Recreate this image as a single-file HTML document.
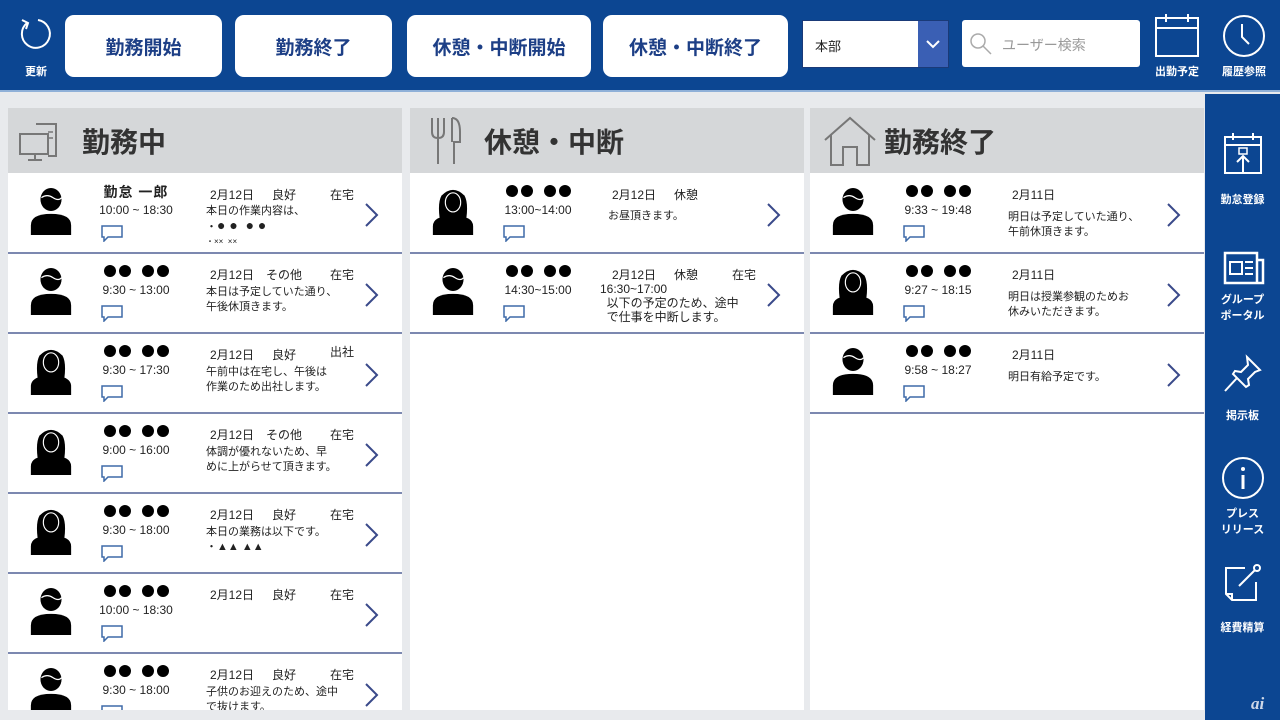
<!DOCTYPE html>
<html><head><meta charset="utf-8">
<style>
*{margin:0;padding:0;box-sizing:border-box}
body{width:1280px;height:720px;overflow:hidden;background:#e8eaed;font-family:"Liberation Sans","Noto Sans CJK JP",sans-serif;position:relative;color:#222}
.hdr{position:absolute;left:0;top:0;width:1280px;height:92px;background:#0c4692;border-bottom:2px solid #8fb0d8}
.btn{position:absolute;top:15px;height:62px;background:#fff;border-radius:9px;color:#1d3f86;font-weight:bold;font-size:19px;display:flex;align-items:center;justify-content:center}
.wt{position:absolute;color:#fff;font-size:11px;font-weight:bold;text-align:center;line-height:16px}
.side{position:absolute;left:1205px;top:94px;width:75px;height:626px;background:#0c4692}
.col{position:absolute;top:108px;width:394px;height:602px;background:#fff;overflow:hidden}
.ch{height:65px;background:#d5d7d9;position:relative}
.ch span{position:absolute;left:74px;top:13px;font-size:28px;font-weight:bold;color:#333}
.card{position:absolute;left:0;width:394px;height:80px;border-bottom:2px solid #7c88b0;background:#fff}
.card>*{position:absolute}
.av{left:20px;top:12px}
.nm{left:80px;width:96px;text-align:center;top:8px;font-size:14px;font-weight:bold;letter-spacing:1px}
.dd{left:80px;width:96px;top:11px;text-align:center;line-height:12px;height:12px}
.dd i{display:inline-block;width:12px;height:12px;border-radius:50%;background:#000;margin:0 1.5px}
.dd b{display:inline-block;width:8px}
.tm{left:80px;width:96px;text-align:center;top:29px;font-size:12px}
.cm{left:92px;top:50px}
.dt{left:202px;top:12px;font-size:12px}
.st{left:264px;top:12px;font-size:12px}
.lc{left:322px;top:12px;font-size:12px}
.ds{left:198px;top:31px;font-size:11px;line-height:15px}
.chev{left:356px;top:28px}
</style></head><body>
<svg width="0" height="0" style="position:absolute">
<defs>
<symbol id="m" viewBox="0 0 48 50"><ellipse cx="24" cy="13" rx="11" ry="12" fill="#000"/><path d="M14 11 q6 -4 12 0 q6 4 9 0" stroke="#fff" stroke-width="1.3" fill="none"/><path d="M3 50 v-10 q0-12 21-12 q21 0 21 12 v10z" fill="#000"/></symbol>
<symbol id="f" viewBox="0 0 48 50"><path d="M10 32 q-2 -16 2 -23 q12 -12 24 0 q4 7 2 23z" fill="#000"/><ellipse cx="24" cy="16" rx="8" ry="10" fill="#000" stroke="#fff" stroke-width="1.2"/><path d="M3 50 v-9 q0-11 21-11 q21 0 21 11 v9z" fill="#000"/></symbol>
<symbol id="c" viewBox="0 0 24 18"><path d="M2 2 h20 v11 h-14 l-4 4 v-4 h-2z" fill="none" stroke="#3e6aa8" stroke-width="1.5"/></symbol>
<symbol id="v" viewBox="0 0 16 26"><path d="M2 2 l11 11 l-11 11" fill="none" stroke="#3a4a8a" stroke-width="2"/></symbol>
</defs></svg>

<div class="hdr">
<svg style="position:absolute;left:18px;top:16px" width="36" height="38" viewBox="0 0 36 38"><path d="M9 7 A14 14 0 1 0 20 4" fill="none" stroke="#fff" stroke-width="2"/><path d="M4 4 l6 3 l-2 6" fill="none" stroke="#fff" stroke-width="2"/></svg>
<div class="wt" style="left:18px;top:64px;width:36px">更新</div>
<div class="btn" style="left:65px;width:157px">勤務開始</div>
<div class="btn" style="left:235px;width:157px">勤務終了</div>
<div class="btn" style="left:407px;width:184px">休憩・中断開始</div>
<div class="btn" style="left:603px;width:185px">休憩・中断終了</div>
<div style="position:absolute;left:802px;top:20px;width:147px;height:48px;background:#fff;border:1px solid #1a3a78"><span style="position:absolute;left:12px;top:15px;font-size:13px">本部</span><div style="position:absolute;right:0;top:0;width:30px;height:46px;background:#3a5fb4"><svg width="30" height="46"><path d="M9 20 l6 6 l6 -6" fill="none" stroke="#fff" stroke-width="2"/></svg></div></div>
<div style="position:absolute;left:962px;top:20px;width:178px;height:47px;background:#fff;border-radius:3px"><svg style="position:absolute;left:6px;top:11px" width="26" height="26"><circle cx="10" cy="10" r="7" fill="none" stroke="#aaa" stroke-width="1.5"/><path d="M15 15 l8 8" stroke="#aaa" stroke-width="1.5"/></svg><span style="position:absolute;left:40px;top:15px;font-size:14px;color:#999">ユーザー検索</span></div>
<svg style="position:absolute;left:1154px;top:12px" width="46" height="46"><rect x="2" y="6" width="42" height="38" fill="none" stroke="#fff" stroke-width="2"/><path d="M2 16 h42 M12 2 v8 M34 2 v8" stroke="#fff" stroke-width="2"/></svg>
<div class="wt" style="left:1146px;top:64px;width:62px">出勤予定</div>
<svg style="position:absolute;left:1221px;top:13px" width="46" height="46"><circle cx="23" cy="23" r="20" fill="none" stroke="#fff" stroke-width="2"/><path d="M21 11 v13 l7 7" fill="none" stroke="#fff" stroke-width="2"/></svg>
<div class="wt" style="left:1212px;top:64px;width:64px">履歴参照</div>
</div>

<div class="side">
<svg style="position:absolute;left:18px;top:38px" width="40" height="44"><rect x="2" y="5" width="36" height="36" fill="none" stroke="#fff" stroke-width="2"/><path d="M2 13 h36 M10 1 v7 M30 1 v7 M20 42 v-18 M14 30 l6 -6 l6 6" fill="none" stroke="#fff" stroke-width="2"/><rect x="16" y="16" width="8" height="6" fill="none" stroke="#fff" stroke-width="1.5"/></svg>
<div class="wt" style="left:0;top:98px;width:75px">勤怠登録</div>
<svg style="position:absolute;left:18px;top:156px" width="42" height="36"><path d="M2 3 h32 v30 h-32z M34 10 h6 v23 h-6" fill="none" stroke="#fff" stroke-width="2.5"/><rect x="7" y="12" width="12" height="12" fill="none" stroke="#fff" stroke-width="2"/><path d="M22 12 h8 M22 18 h8 M22 24 h8" stroke="#fff" stroke-width="2"/></svg>
<div class="wt" style="left:0;top:198px;width:75px">グループ<br>ポータル</div>
<svg style="position:absolute;left:18px;top:260px" width="40" height="40"><path d="M24 3 l13 13 l-5 2 l-7 7 l1 6 l-3 2 l-13 -13 l2 -3 l6 1 l7 -7z M14 24 l-12 13" fill="none" stroke="#fff" stroke-width="2"/></svg>
<div class="wt" style="left:0;top:314px;width:75px">掲示板</div>
<svg style="position:absolute;left:16px;top:362px" width="44" height="44"><circle cx="22" cy="22" r="20" fill="none" stroke="#fff" stroke-width="2"/><circle cx="22" cy="13" r="2" fill="#fff"/><path d="M22 19 v14" stroke="#fff" stroke-width="3"/></svg>
<div class="wt" style="left:0;top:412px;width:75px">プレス<br>リリース</div>
<svg style="position:absolute;left:18px;top:468px" width="40" height="40"><path d="M22 6 h-19 v26 l6 6 h24 v-18 M3 32 h6 v6" fill="none" stroke="#fff" stroke-width="2"/><path d="M16 24 l16 -16" stroke="#fff" stroke-width="2"/><circle cx="34" cy="6" r="3" fill="none" stroke="#fff" stroke-width="2"/></svg>
<div class="wt" style="left:0;top:526px;width:75px">経費精算</div>
<div style="position:absolute;left:46px;top:600px;color:#cfd8e8;font-style:italic;font-weight:bold;font-size:17px;font-family:'Liberation Serif',serif">ai</div>
</div>

<!-- Column 1 -->
<div class="col" style="left:8px">
<div class="ch"><svg style="position:absolute;left:10px;top:12px" width="52" height="44"><rect x="2" y="14" width="28" height="20" fill="none" stroke="#777" stroke-width="2"/><path d="M10 40 h14 M17 34 v6 M18 4 h20 v32 h-8" fill="none" stroke="#777" stroke-width="2"/><path d="M30 12 h5 M30 18 h5" stroke="#777" stroke-width="1.5"/></svg><span>勤務中</span></div>
<div class="card" style="top:66px"><svg class="av" width="46" height="50"><use href="#m"/></svg><div class="nm">勤怠 一郎</div><div class="tm">10:00 ~ 18:30</div><svg class="cm" width="24" height="18"><use href="#c"/></svg><div class="dt">2月12日</div><div class="st">良好</div><div class="lc">在宅</div><div class="ds" style="top:30px;line-height:14px">本日の作業内容は、<br>・<b style="font-size:14px">● ● &nbsp;● ●</b><br><span style="font-size:8px">・×× &nbsp;××</span></div><svg class="chev" width="16" height="26"><use href="#v"/></svg></div>
<div class="card" style="top:146px"><svg class="av" width="46" height="50"><use href="#m"/></svg><div class="dd"><i></i><i></i><b></b><i></i><i></i></div><div class="tm">9:30 ~ 13:00</div><svg class="cm" width="24" height="18"><use href="#c"/></svg><div class="dt">2月12日</div><div class="st" style="left:258px">その他</div><div class="lc">在宅</div><div class="ds">本日は予定していた通り、<br>午後休頂きます。</div><svg class="chev" width="16" height="26"><use href="#v"/></svg></div>
<div class="card" style="top:226px"><svg class="av" width="46" height="50"><use href="#f"/></svg><div class="dd"><i></i><i></i><b></b><i></i><i></i></div><div class="tm">9:30 ~ 17:30</div><svg class="cm" width="24" height="18"><use href="#c"/></svg><div class="dt">2月12日</div><div class="st">良好</div><div class="lc" style="top:9px">出社</div><div class="ds">午前中は在宅し、午後は<br>作業のため出社します。</div><svg class="chev" width="16" height="26"><use href="#v"/></svg></div>
<div class="card" style="top:306px"><svg class="av" width="46" height="50"><use href="#f"/></svg><div class="dd"><i></i><i></i><b></b><i></i><i></i></div><div class="tm">9:00 ~ 16:00</div><svg class="cm" width="24" height="18"><use href="#c"/></svg><div class="dt">2月12日</div><div class="st" style="left:258px">その他</div><div class="lc">在宅</div><div class="ds">体調が優れないため、早<br>めに上がらせて頂きます。</div><svg class="chev" width="16" height="26"><use href="#v"/></svg></div>
<div class="card" style="top:386px"><svg class="av" width="46" height="50"><use href="#f"/></svg><div class="dd"><i></i><i></i><b></b><i></i><i></i></div><div class="tm">9:30 ~ 18:00</div><svg class="cm" width="24" height="18"><use href="#c"/></svg><div class="dt">2月12日</div><div class="st">良好</div><div class="lc">在宅</div><div class="ds">本日の業務は以下です。<br>・▲▲ ▲▲</div><svg class="chev" width="16" height="26"><use href="#v"/></svg></div>
<div class="card" style="top:466px"><svg class="av" width="46" height="50"><use href="#m"/></svg><div class="dd"><i></i><i></i><b></b><i></i><i></i></div><div class="tm">10:00 ~ 18:30</div><svg class="cm" width="24" height="18"><use href="#c"/></svg><div class="dt">2月12日</div><div class="st">良好</div><div class="lc">在宅</div><svg class="chev" width="16" height="26"><use href="#v"/></svg></div>
<div class="card" style="top:546px"><svg class="av" width="46" height="50"><use href="#m"/></svg><div class="dd"><i></i><i></i><b></b><i></i><i></i></div><div class="tm">9:30 ~ 18:00</div><svg class="cm" width="24" height="18"><use href="#c"/></svg><div class="dt">2月12日</div><div class="st">良好</div><div class="lc">在宅</div><div class="ds">子供のお迎えのため、途中<br>で抜けます。</div><svg class="chev" width="16" height="26"><use href="#v"/></svg></div>
</div>

<!-- Column 2 -->
<div class="col" style="left:410px">
<div class="ch"><svg style="position:absolute;left:18px;top:6px" width="40" height="52"><path d="M4 4 v14 q0 6 6 6 q6 0 6 -6 v-14 M10 4 v46 M24 4 q8 0 8 14 v10 h-6 v22 M24 4 v24" fill="none" stroke="#777" stroke-width="2"/></svg><span>休憩・中断</span></div>
<div class="card" style="top:66px"><svg class="av" width="46" height="50"><use href="#f"/></svg><div class="dd"><i></i><i></i><b></b><i></i><i></i></div><div class="tm">13:00~14:00</div><svg class="cm" width="24" height="18"><use href="#c"/></svg><div class="dt">2月12日</div><div class="st">休憩</div><div class="ds" style="top:35px">お昼頂きます。</div><svg class="chev" width="16" height="26"><use href="#v"/></svg></div>
<div class="card" style="top:146px"><svg class="av" width="46" height="50"><use href="#m"/></svg><div class="dd"><i></i><i></i><b></b><i></i><i></i></div><div class="tm">14:30~15:00</div><svg class="cm" width="24" height="18"><use href="#c"/></svg><div class="dt">2月12日</div><div class="st">休憩</div><div class="lc">在宅</div><div class="ds" style="left:190px;top:28px;font-size:12px;line-height:14px">16:30~17:00<br>&nbsp;&nbsp;以下の予定のため、途中<br>&nbsp;&nbsp;で仕事を中断します。</div><svg class="chev" width="16" height="26"><use href="#v"/></svg></div>
</div>

<!-- Column 3 -->
<div class="col" style="left:810px">
<div class="ch"><svg style="position:absolute;left:12px;top:6px" width="56" height="54"><path d="M3 26 l25 -22 l25 22 M9 21 v30 h12 v-18 h14 v18 h12 v-30" fill="none" stroke="#777" stroke-width="2"/></svg><span>勤務終了</span></div>
<div class="card" style="top:66px"><svg class="av" width="46" height="50"><use href="#m"/></svg><div class="dd"><i></i><i></i><b></b><i></i><i></i></div><div class="tm">9:33 ~ 19:48</div><svg class="cm" width="24" height="18"><use href="#c"/></svg><div class="dt">2月11日</div><div class="ds" style="top:36px">明日は予定していた通り、<br>午前休頂きます。</div><svg class="chev" width="16" height="26"><use href="#v"/></svg></div>
<div class="card" style="top:146px"><svg class="av" width="46" height="50"><use href="#f"/></svg><div class="dd"><i></i><i></i><b></b><i></i><i></i></div><div class="tm">9:27 ~ 18:15</div><svg class="cm" width="24" height="18"><use href="#c"/></svg><div class="dt">2月11日</div><div class="ds" style="top:36px">明日は授業参観のためお<br>休みいただきます。</div><svg class="chev" width="16" height="26"><use href="#v"/></svg></div>
<div class="card" style="top:226px"><svg class="av" width="46" height="50"><use href="#m"/></svg><div class="dd"><i></i><i></i><b></b><i></i><i></i></div><div class="tm">9:58 ~ 18:27</div><svg class="cm" width="24" height="18"><use href="#c"/></svg><div class="dt">2月11日</div><div class="ds" style="top:36px">明日有給予定です。</div><svg class="chev" width="16" height="26"><use href="#v"/></svg></div>
</div>
</body></html>
